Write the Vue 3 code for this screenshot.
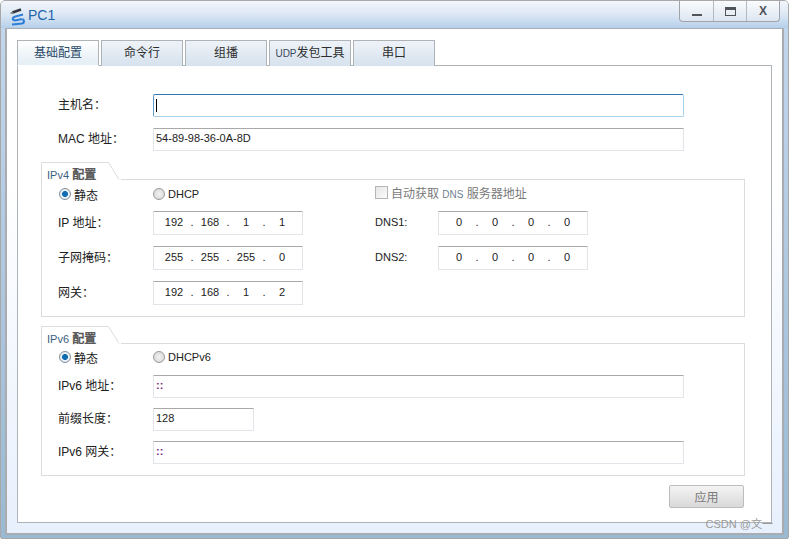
<script setup>
const ipv4Rows = [
  { label: '子网掩码：', octets: ['255', '255', '255', '0'] },
  { label: '网关：', octets: ['192', '168', '1', '2'] },
]
const tabs = [
  { text: '基础配置' },
  { text: '命令行' },
  { text: '组播' },
  { latin: 'UDP', text: '发包工具' },
  { text: '串口' },
]
const emptyIp = ['0', '0', '0', '0']
</script>

<template>
  <div class="window">
    <div class="titlebar">
      <svg class="app-icon" width="18" height="22" viewBox="0 0 18 22">
        <path d="M3.5 8.5 L12 5.5" stroke="#33383e" stroke-width="2.6" fill="none" />
        <path d="M1.5 9h3" stroke="#6d7278" stroke-width="1.6" />
        <path d="M14 10.5 L6.5 12.5 C3 13.5 3 16 6 16.5 L13 15" stroke="#2f7fd6" stroke-width="2.2" fill="none" />
        <path d="M3 20.5 L13 19.5 C15.5 19 15.5 16.5 13.5 15" stroke="#2f7fd6" stroke-width="2.2" fill="none" />
      </svg>
      <span class="title">PC1</span>
      <div class="controls">
        <button class="ctl"><span class="min"></span></button>
        <button class="ctl"><span class="max"></span></button>
        <button class="ctl close">X</button>
      </div>
    </div>

    <div class="client">
      <div class="tabs">
        <div v-for="(t, i) in tabs" :key="t.text" class="tab" :class="{ active: i === 0 }">
          <span v-if="t.latin" class="tab-latin">{{ t.latin }}</span>{{ t.text }}
        </div>
      </div>

      <div class="panel">
        <div class="top-row">
          <label class="lbl">主机名：</label>
          <div class="input wide focused"><span class="caret"></span></div>
        </div>
        <div class="top-row">
          <label class="lbl">MAC 地址：</label>
          <div class="input wide">54-89-98-36-0A-8D</div>
        </div>

        <section class="group first">
          <div class="legend-row">
            <div class="legend">
              <svg class="legend-edge" width="80" height="18" viewBox="0 0 80 18">
                <path d="M0.5 18V0.5H67.5L78 17.5" fill="none" stroke="#dcdcdc" />
              </svg>
              <span class="legend-text"><span class="blue">IPv4</span> 配置</span>
            </div>
          </div>
          <div class="group-body v4">
            <div class="choice-row">
              <div class="radio-cell">
                <span class="radio on"></span><span>静态</span>
              </div>
              <div class="radio-cell">
                <span class="radio"></span><span class="latin">DHCP</span>
              </div>
              <div class="check-cell">
                <span class="check"></span>
                <span class="muted">自动获取 <span class="muted-blue">DNS</span> 服务器地址</span>
              </div>
            </div>

            <div class="ip-row">
              <label class="lbl">IP 地址：</label>
              <div class="input ip">
                <template v-for="(o, i) in ['192', '168', '1', '1']" :key="i">
                  <span class="octet">{{ o }}</span><span v-if="i < 3" class="dot">.</span>
                </template>
              </div>
              <label class="lbl dns">DNS1:</label>
              <div class="input ip">
                <template v-for="(o, i) in emptyIp" :key="i">
                  <span class="octet">{{ o }}</span><span v-if="i < 3" class="dot">.</span>
                </template>
              </div>
            </div>

            <div class="ip-row">
              <label class="lbl">{{ ipv4Rows[0].label }}</label>
              <div class="input ip">
                <template v-for="(o, i) in ipv4Rows[0].octets" :key="i">
                  <span class="octet">{{ o }}</span><span v-if="i < 3" class="dot">.</span>
                </template>
              </div>
              <label class="lbl dns">DNS2:</label>
              <div class="input ip">
                <template v-for="(o, i) in emptyIp" :key="i">
                  <span class="octet">{{ o }}</span><span v-if="i < 3" class="dot">.</span>
                </template>
              </div>
            </div>

            <div class="ip-row">
              <label class="lbl">{{ ipv4Rows[1].label }}</label>
              <div class="input ip">
                <template v-for="(o, i) in ipv4Rows[1].octets" :key="i">
                  <span class="octet">{{ o }}</span><span v-if="i < 3" class="dot">.</span>
                </template>
              </div>
            </div>
          </div>
        </section>

        <section class="group second">
          <div class="legend-row">
            <div class="legend">
              <svg class="legend-edge" width="80" height="18" viewBox="0 0 80 18">
                <path d="M0.5 18V0.5H67.5L78 17.5" fill="none" stroke="#dcdcdc" />
              </svg>
              <span class="legend-text"><span class="blue">IPv6</span> 配置</span>
            </div>
          </div>
          <div class="group-body v6">
            <div class="choice-row">
              <div class="radio-cell">
                <span class="radio on"></span><span>静态</span>
              </div>
              <div class="radio-cell">
                <span class="radio"></span><span class="latin">DHCPv6</span>
              </div>
            </div>
            <div class="v6-row">
              <label class="lbl">IPv6 地址：</label>
              <div class="input wide colons">::</div>
            </div>
            <div class="v6-row">
              <label class="lbl">前缀长度：</label>
              <div class="input prefix">128</div>
            </div>
            <div class="v6-row">
              <label class="lbl">IPv6 网关：</label>
              <div class="input wide colons">::</div>
            </div>
          </div>
        </section>

        <div class="footer">
          <button class="apply">应用</button>
        </div>
      </div>
    </div>
    <span class="watermark">CSDN @文一</span>
  </div>
</template>

<style scoped>
.window {
  position: relative;
  width: 789px;
  height: 539px;
  box-sizing: border-box;
  overflow: hidden;
  display: flex;
  flex-direction: column;
  background: linear-gradient(to bottom, #c4d8ed, #9ab9d3);
  border: 1px solid #a8a8a8;
  border-radius: 5px 5px 2px 2px;
  font-family: "Liberation Sans", "Noto Sans CJK SC", sans-serif;
  font-size: 11px;
  color: #222;
}

.titlebar {
  height: 27px;
  flex: none;
  display: flex;
  align-items: center;
  padding-left: 8px;
  background: linear-gradient(to bottom, #f3f6fb, #dfe9f5 45%, #b5d0ea);
}

.app-icon {
  margin-right: 1px;
}

.title {
  font-size: 14px;
  color: #1f65ab;
}

.controls {
  margin-left: auto;
  margin-right: 8px;
  align-self: flex-start;
  display: flex;
  height: 20px;
  border: 1px solid #a0a4a9;
  border-top: none;
  border-radius: 0 0 4px 4px;
  background: linear-gradient(to bottom, #fafbfd, #dde6f1);
}

.ctl {
  width: 33px;
  padding: 0;
  border: none;
  border-left: 1px solid #b4b9bf;
  background: none;
  display: flex;
  align-items: center;
  justify-content: center;
  font-family: "Liberation Sans", sans-serif;
  font-size: 12px;
  font-weight: bold;
  color: #50535a;
}

.ctl:first-child {
  border-left: none;
}

.min {
  width: 10px;
  height: 2px;
  margin-top: 7px;
  background: #50535a;
}

.max {
  width: 9px;
  height: 5px;
  border: 1px solid #50535a;
  border-top-width: 3px;
}

.client {
  flex: 1;
  margin: 0 4px 3px 4px;
  padding: 11px 10px 10px 10px;
  background: linear-gradient(to bottom, #ffffff, #ffffff 30%, #e8f0fd);
  border: 2px solid #a9adb2;
  border-top-width: 1px;
  display: flex;
  flex-direction: column;
}

.tabs {
  display: flex;
  gap: 2px;
  height: 26px;
  flex: none;
  margin-bottom: -1px;
  position: relative;
}

.tab {
  width: 82px;
  box-sizing: border-box;
  border: 1px solid #aeb3b8;
  border-bottom: none;
  background: linear-gradient(to bottom, #eef3f8, #d6e2ee);
  text-align: center;
  line-height: 25px;
  font-size: 12px;
  color: #2d2d2d;
}

.tab-latin {
  font-size: 10px;
  color: #3a4a5c;
}

.tab.active {
  background: linear-gradient(to bottom, #ffffff, #e8f0f7 80%);
  height: 26px;
  color: #2a4a68;
  border-bottom: 1px solid #fff;
  position: relative;
  z-index: 1;
}

.panel {
  flex: 1;
  border: 1px solid #aeb3b8;
  padding: 28px 26px 14px 23px;
  background: #fff;
}

.top-row {
  display: flex;
  align-items: center;
  padding-left: 17px;
  margin-bottom: 11px;
}

.lbl {
  width: 95px;
  flex: none;
  box-sizing: border-box;
  padding-bottom: 4px;
  font-size: 12px;
  color: #222;
  white-space: nowrap;
}

.input {
  box-sizing: border-box;
  height: 23px;
  border: 1px solid #e1e4e8;
  border-top-color: #a9a9a9;
  border-radius: 1px;
  background: #fff;
  display: flex;
  align-items: center;
  padding: 0 0 3px 2px;
  font-size: 11px;
  color: #222;
}

.wide {
  width: 531px;
}

.focused {
  padding: 0 0 0 2px;
  border-color: #a9d0ea;
  border-top-color: #2f78b3;
  border-left-color: #5d9dcb;
  border-radius: 2px;
}

.caret {
  width: 1px;
  height: 13px;
  background: #000;
}

.group {
  display: flex;
  flex-direction: column;
}

.second {
  margin-top: 9px;
}

.legend-row {
  height: 18px;
  display: flex;
}

.legend {
  position: relative;
  width: 80px;
  flex: none;
  line-height: 26px;
  font-size: 12px;
}

.legend-edge {
  position: absolute;
  left: 0;
  top: 0;
}

.legend-text {
  position: absolute;
  left: 6px;
  top: 0;
  color: #555;
  -webkit-text-stroke: 0.5px #555;
  white-space: nowrap;
}

.blue {
  font-size: 11px;
  color: #3c5f7f;
  -webkit-text-stroke: 0;
}

.legend-row::after {
  content: '';
  flex: 1;
  border-bottom: 1px solid #dcdcdc;
}

.group-body {
  border: 1px solid #dcdcdc;
  border-top: none;
  padding-left: 16px;
}

.v4 {
  padding-top: 5px;
  padding-bottom: 11px;
  display: flex;
  flex-direction: column;
  gap: 11px;
}

.v6 {
  padding-top: 4px;
  padding-bottom: 11px;
  display: flex;
  flex-direction: column;
  gap: 10px;
}

.choice-row {
  display: flex;
  height: 18px;
  align-items: center;
  font-size: 12px;
  margin-bottom: -3px;
}

.v6 .choice-row {
  margin-bottom: -1px;
}

.radio-cell {
  width: 94px;
  margin-left: 1px;
  margin-right: -1px;
  display: flex;
  align-items: center;
  gap: 3px;
}

.latin {
  font-size: 11px;
}

.radio {
  box-sizing: border-box;
  width: 12px;
  height: 12px;
  border-radius: 50%;
  border: 1px solid #9a9a9a;
  background: radial-gradient(circle at 50% 50%, #f2f2f2, #d4d4d4);
}

.radio.on {
  border-color: #7d8f9f;
  background: radial-gradient(circle, #0f6cb0 0 2.6px, #eef3f7 3.4px, #d8e0e8);
}

.check-cell {
  margin-left: 129px;
  margin-bottom: 3px;
  display: flex;
  align-items: center;
  gap: 3px;
}

.check {
  box-sizing: border-box;
  width: 13px;
  height: 13px;
  border: 1px solid #b5b5b5;
  background: linear-gradient(135deg, #e6e6e6, #fbfbfb);
}

.muted {
  color: #7a7a7a;
}

.muted-blue {
  font-size: 10px;
  color: #6f7f90;
}

.ip-row {
  display: flex;
  align-items: center;
  height: 24px;
}

.ip {
  width: 150px;
  height: 24px;
  padding-left: 6px;
}

.octet {
  width: 28px;
  text-align: center;
}

.dot {
  width: 8px;
  text-align: center;
}

.dns {
  width: 63px;
  margin-left: 72px;
  padding-bottom: 2px;
  font-size: 11px;
}

.v6-row {
  display: flex;
  align-items: center;
}

.prefix {
  width: 101px;
}

.colons {
  color: #7a1f7a;
  font-weight: bold;
}

.footer {
  display: flex;
  justify-content: flex-end;
  margin-top: 9px;
  padding-right: 1px;
}

.apply {
  box-sizing: border-box;
  width: 75px;
  height: 23px;
  padding: 0;
  border: 1px solid #bcbcbc;
  border-radius: 2px;
  background: linear-gradient(to bottom, #f4f4f4, #d9d9d9);
  font-family: "Noto Sans CJK SC", sans-serif;
  font-size: 12px;
  color: #7a7a7a;
}

.watermark {
  position: absolute;
  right: 15px;
  bottom: 7px;
  font-size: 11px;
  color: #9a9a9a;
}
</style>
